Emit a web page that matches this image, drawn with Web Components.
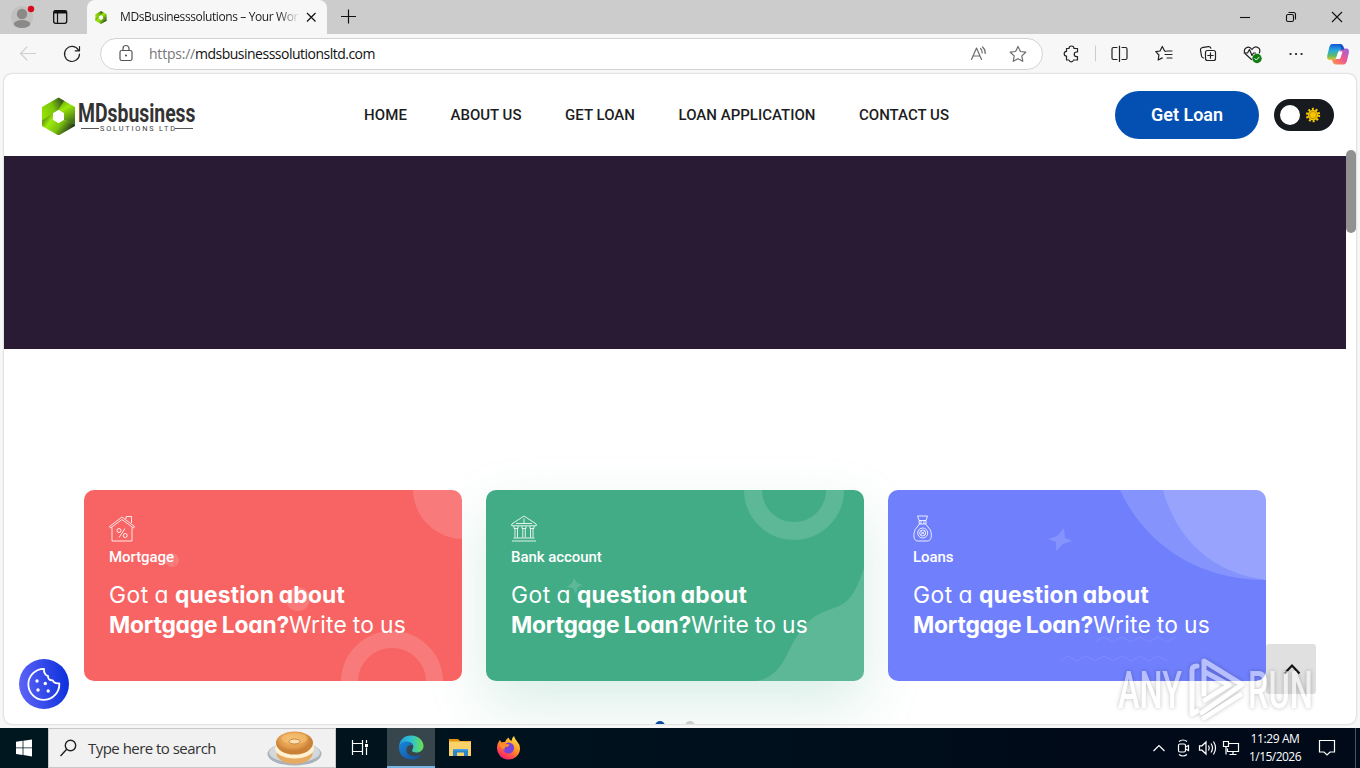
<!DOCTYPE html>
<html lang="en">
<head>
<meta charset="utf-8">
<title>MDsBusinesssolutions – Your World</title>
<style>
  :root {
    --ui-font: "Open Sans", "Noto Sans", sans-serif;
    --web-font: Roboto, sans-serif;
    --button-color: #0450b2;
  }

  * {
    box-sizing: border-box;
  }

  body {
    margin: 0;
    width: 1360px;
    height: 768px;
    overflow: hidden;
    display: flex;
    flex-direction: column;
    background: #f7f7f7;
    font-family: var(--ui-font);
  }
</style>
</head>
<body>
<tab-strip></tab-strip>
<address-toolbar></address-toolbar>
<web-page>
  <site-header></site-header>
  <loan-card kind="mortgage" color="#f86363">Mortgage</loan-card>
  <loan-card kind="bank" color="#41ac86">Bank account</loan-card>
  <loan-card kind="loans" color="#7080fd">Loans</loan-card>
</web-page>
<task-bar></task-bar>

<script>
// Inline text spread over a given width with letter-spacing
class FitText extends HTMLElement {
  constructor() {
    super();
    this.attachShadow({ mode: "open" });
  }

  connectedCallback() {
    this.shadowRoot.innerHTML = `<style>:host { display: inline-block; white-space: pre; }</style><slot></slot>`;
    const width = Number(this.getAttribute("width"));
    const natural = this.getBoundingClientRect().width;
    const count = this.textContent.length;
    this.style.letterSpacing = (width - natural) / count + "px";
  }
}

customElements.define("fit-text", FitText);

const hexLogo = `
  <linearGradient id="g1" x1="0" y1=".6" x2="1" y2=".1">
    <stop offset="0" stop-color="#92e000"/><stop offset=".45" stop-color="#7cc60c"/><stop offset="1" stop-color="#27381c"/>
  </linearGradient>
  <linearGradient id="g2" x1="0" y1="0" x2=".4" y2="1">
    <stop offset="0" stop-color="#5f9c12"/><stop offset=".4" stop-color="#9ae808"/><stop offset="1" stop-color="#48751a"/>
  </linearGradient>
  <linearGradient id="g3" x1="0" y1="0" x2="1" y2=".5">
    <stop offset="0" stop-color="#36551c"/><stop offset=".35" stop-color="#9dea0a"/><stop offset=".65" stop-color="#7cc30f"/><stop offset="1" stop-color="#26361c"/>
  </linearGradient>
  <path d="M0 9.500 16.500 0 23 3.800 17 12.300 11 16 0 24z" fill="url(#g1)"/>
  <path d="M22 3.200 33 9.500V28l-11-5.800v-6.400l-5.500-3.500z" fill="url(#g2)"/>
  <path d="M0 28.500V23l11-7.500v6.700l5.500 3.300 5.500-3.300 11 5v1.300L16.500 38z" fill="url(#g3)"/>
  <path d="M16.500 12.500 22 15.800v6.400l-5.500 3.300-5.500-3.300v-6.400z" fill="#fff"/>
`;

class TabStrip extends HTMLElement {
  constructor() {
    super();
    this.attachShadow({ mode: "open" });
  }

  connectedCallback() {
    this.shadowRoot.innerHTML = `
      <style>
        :host { display: flex; height: 34px; background: #ccc; flex: none; }
        svg { display: block; flex: none; fill: none; stroke: #111; }
        .tab {
          position: relative;
          display: flex;
          align-items: center;
          width: 240px;
          height: 34px;
          padding-left: 8px;
          box-sizing: border-box;
          background: #f7f7f7;
          border-radius: 8px 8px 0 0;
        }
        .title {
          width: 180px;
          margin-left: 13px;
          overflow: hidden;
          font-size: 12px;
          line-height: 18px;
          white-space: nowrap;
          color: #1b1b1b;
          -webkit-mask-image: linear-gradient(90deg, #000 158px, transparent 180px);
          mask-image: linear-gradient(90deg, #000 158px, transparent 180px);
        }
        .space { flex: 1; }
      </style>
      <svg width="87" height="34" viewBox="0 0 87 34">
        <circle cx="22" cy="17" r="11" fill="#c3c1bf" stroke="none"/>
        <circle cx="22" cy="14" r="5.200" fill="#8c8a88" stroke="none"/>
        <ellipse cx="22" cy="24" rx="8.300" ry="4" fill="#8c8a88" stroke="none"/>
        <circle cx="31" cy="9" r="3.200" fill="#d90a1e" stroke="none"/>
        <rect x="53.700" y="10.700" width="13" height="12.600" rx="2" stroke-width="1.300"/>
        <path d="M54 12h12.500" stroke-width="3"/>
        <path d="M57.500 13v10" stroke-width="1.200"/>
      </svg>
      <div class="tab">
        <svg width="12" height="13" viewBox="0 0 33 38" style="stroke:none">${hexLogo}</svg>
        <div class="title"><fit-text width="178">MDsBusinesssolutions – Your Wor</fit-text></div>
        <svg width="22" height="22" viewBox="0 0 22 22"><path d="M7 7l8.500 8.500M15.500 7 7 15.500" stroke-width="1.200"/></svg>
      </div>
      <svg width="42" height="34" viewBox="0 0 42 34"><path d="M14 16.500h15M21.500 9.500v14" stroke-width="1.200"/></svg>
      <div class="space"></div>
      <svg width="138" height="34" viewBox="0 0 138 34" stroke-width="1.100">
        <path d="M18 17.500h10"/>
        <rect x="64.500" y="14.500" width="7" height="7" rx="1.500"/>
        <path d="M66.500 12.500h5a2 2 0 0 1 2 2v5"/>
        <path d="M110 12l10 10M120 12l-10 10"/>
      </svg>
    `;
  }
}

customElements.define("tab-strip", TabStrip);

class AddressToolbar extends HTMLElement {
  constructor() {
    super();
    this.attachShadow({ mode: "open" });
  }

  connectedCallback() {
    this.shadowRoot.innerHTML = `
      <style>
        :host { display: flex; align-items: center; height: 40px; flex: none; background: #f7f7f7; }
        svg { display: block; flex: none; fill: none; stroke: #222; stroke-width: 1.200; stroke-linecap: round; stroke-linejoin: round; }
        .bar {
          display: flex;
          align-items: center;
          box-sizing: border-box;
          width: 943px;
          height: 32px;
          border: 1px solid #d3d3d3;
          border-radius: 16px;
          background: #fff;
        }
        .url { flex: 1; font-size: 14px; line-height: 20px; color: #111; margin-left: 6px; }
        .url .scheme { color: #777; }
      </style>
      <svg width="100" height="40" viewBox="0 0 100 40">
        <path d="M20.500 19.500h15M27 13l-6.500 6.500L27 26" style="stroke:#cfcfcf"/>
        <path d="M78.500 16.200a7.500 7.500 0 1 0 1 3.800M79.500 12.500v4.300h-4.300"/>
      </svg>
      <div class="bar">
        <svg width="42" height="30" viewBox="0 0 42 30" style="stroke:#555">
          <rect x="19" y="11.500" width="12" height="10" rx="1.800"/>
          <path d="M22 11V9.500a3 3 0 0 1 6 0V11"/><circle cx="25" cy="16.500" r=".5"/>
        </svg>
        <div class="url"><fit-text class="scheme" width="46">https://</fit-text><fit-text width="180">mdsbusinesssolutionsltd.com</fit-text></div>
        <svg width="76" height="30" viewBox="0 0 76 30" style="stroke:#6d6d6d">
          <path d="M5.500 20.500 10.500 9 15.500 20.500M7.200 17h6.600M14.500 9.500q2 1.800 1.700 4.500M16.500 8q3 2.500 2.700 6.500"/>
          <path d="M52 7.500l2.400 5 5.400.7-4 3.700 1 5.400-4.800-2.600-4.800 2.600 1-5.400-4-3.700 5.400-.7z"/>
        </svg>
      </div>
      <svg width="317" height="40" viewBox="1043 0 317 40">
        <path d="M1066.500 14.500h2.500a2.500 2.500 0 0 1 5 0h3.500v3.500h-1a2.300 2.300 0 0 0 0 4.600h1V26h-4a2.300 2.300 0 0 1-4.500 0h-2.500v-4a2.300 2.300 0 0 1 0-4.600z"/>
        <path d="M1095.500 12v15" style="stroke:#ccc;stroke-width:1"/>
        <path d="M1117 13.500h-3.500a1.500 1.500 0 0 0-1.500 1.500v9a1.500 1.500 0 0 0 1.500 1.500h3.500M1122 13.500h3.500a1.500 1.500 0 0 1 1.500 1.500v9a1.500 1.500 0 0 1-1.500 1.500h-3.500M1119.500 12v15.500"/>
        <path d="M1166 17.300l-1.400-.3-2.300-4.500-2.300 4.500-4.200.7 3.100 3.300-.7 5 4.100-2.100M1167 17h5M1165 20.500h7M1167 24h5"/>
        <path d="M1203.500 24c-1.200-.3-1.900-1-2-2l-1-6c-.2-1.200.5-2 1.500-2.300l6.200-1c1.200-.2 2.200.3 2.700 1.500"/>
        <rect x="1205.500" y="16.500" width="10" height="10" rx="2"/><path d="M1210.500 18.800v5.400M1207.800 21.500h5.400"/>
        <path d="M1251.500 25.500l-6-5.500c-4-5 3-9.500 6.500-4.500 3.500-5 9.500-1.500 7.300 3.500M1244 19h3.500l2-3.500 2.500 6 1.500-2.500h2"/>
        <circle cx="1257" cy="24.500" r="4.700" fill="#107c10" style="stroke:none"/><path d="M1254.800 24.600l1.500 1.500 2.900-3" style="stroke:#fff;stroke-width:1"/>
        <path d="M1290.500 20h.1M1296 20h.1M1301.500 20h.1" style="stroke-width:2.200"/>
        <defs>
          <linearGradient id="c1" x1="0" y1="0" x2="0" y2="1"><stop offset="0" stop-color="#1458d4"/><stop offset=".4" stop-color="#25a9dd"/><stop offset=".75" stop-color="#63bd63"/><stop offset="1" stop-color="#eec531"/></linearGradient>
          <linearGradient id="c2" x1="1" y1="0" x2="0" y2="1"><stop offset="0" stop-color="#9964e8"/><stop offset=".5" stop-color="#ef568e"/><stop offset="1" stop-color="#ff9a42"/></linearGradient>
        </defs>
        <g style="stroke:none">
          <path d="M1332 10h8q2.500 0 3.300 2.500l1 3.500h-3q-2.300 0-3 2.300l-1.500 5q-.8 2.700-3.500 2.700h-3q-4 0-3-4.500l1.800-7.500q1-4 2.900-4z" fill="url(#c1)"/>
          <path d="M1345.500 14.500h.8q3.300.2 2.500 4.500l-1.800 7.500q-1 4-3.500 4h-7.500q-2.500 0-3.300-2.500l-.7-2.500h2.500q2.300 0 3-2.300l1.700-5q.8-3.200 3.500-3.700z" fill="url(#c2)"/>
          <path d="M1340 10q2.500.2 3.300 2.500l1 3.300h-3q-1-5.500-3.300-5.800z" fill="#184fca"/>
          <path d="M1338.300 17.500h4.200l-2 6.500q-.4 1-1.500 1h-3.200z" fill="#fff"/>
        </g>
      </svg>
    `;
  }
}

customElements.define("address-toolbar", AddressToolbar);

class SiteHeader extends HTMLElement {
  constructor() {
    super();
    this.attachShadow({ mode: "open" });
  }

  connectedCallback() {
    this.shadowRoot.innerHTML = `
      <style>
        :host {
          display: flex;
          align-items: center;
          height: 82px;
          flex: none;
          font-family: var(--web-font);
          color: #1c1d22;
        }
        svg { display: block; }
        .logo { margin-left: 38px; }
        nav {
          display: flex;
          gap: 43.500px;
          margin-left: 167px;
          font-size: 15px;
          font-weight: 500;
          line-height: 20px;
        }
        .loan {
          display: flex;
          justify-content: center;
          align-items: center;
          width: 144px;
          height: 48px;
          margin: 0 15px 0 auto;
          border-radius: 24px;
          background: var(--button-color);
          color: #fff;
          font-size: 18px;
          font-weight: 600;
          line-height: 22px;
        }
        .loan fit-text { margin-top: -1px; }
        .toggle {
          display: flex;
          align-items: center;
          gap: 5px;
          box-sizing: border-box;
          width: 60px;
          height: 32px;
          margin-right: 22px;
          padding-left: 6px;
          border-radius: 16px;
          background: #171b20;
        }
        .knob { width: 20px; height: 20px; border-radius: 50%; background: #fff; }
      </style>
      <svg class="logo" width="155" height="40" viewBox="0 0 155 40">
        <g transform="translate(0 2.500)">${hexLogo}</g>
        <text x="36" y="27" font-size="26" font-weight="700" fill="#333" textLength="117.500" lengthAdjust="spacingAndGlyphs">MDsbusiness</text>
        <text x="58" y="36" font-size="7.400" fill="#444" textLength="75" lengthAdjust="spacing">SOLUTIONS LTD</text>
        <path d="M39 33.500h18M133 33.500h18" stroke="#555"/>
      </svg>
      <nav>
        <fit-text width="43">HOME</fit-text>
        <fit-text width="71">ABOUT US</fit-text>
        <fit-text width="70">GET LOAN</fit-text>
        <fit-text width="137">LOAN APPLICATION</fit-text>
        <fit-text width="90">CONTACT US</fit-text>
      </nav>
      <div class="loan"><fit-text width="72">Get Loan</fit-text></div>
      <div class="toggle">
        <div class="knob"></div>
        <svg width="16" height="16" viewBox="-8 -8 16 16">
          <circle r="6" fill="none" stroke="#f6c500" stroke-width="2.400" stroke-dasharray="2 1.770"/>
          <circle r="5.200" fill="#f6c500"/><circle r="3.600" fill="none" stroke="#8d7200" stroke-width=".6"/>
        </svg>
      </div>
    `;
  }
}

customElements.define("site-header", SiteHeader);

const cardArt = {
  mortgage: `
    <circle cx="379" cy="-1" r="50"/>
    <circle cx="308" cy="192" r="42.500" fill="none" stroke="#fff" stroke-width="17"/>
    <circle cx="214" cy="109" r="12"/><circle cx="88" cy="70" r="7"/>`,
  bank: `
    <circle cx="308" cy="0" r="41" fill="none" stroke="#fff" stroke-width="18"/>
    <path d="M378 78c-7 21-13 32-23 37-12 6-24 7-35 19-14 15-18 33-28 45-6 7-14 11-22 12h108z"/>
    <path d="M88 88l3 5 6 2-5 2-2 7-3-6-6-1 5-4z"/>`,
  loans: `
    <path d="M232 0c22 48 71 90 146 90V0z"/>
    <path d="M275 0c13 48 48 83 103 90V0z"/>
    <path d="M176 38l1 10 7 3-9 3-7 7v-9l-8-3 9-3z"/>
    <path d="M173 171l7-5 9 5 9-5 9 5 9-5 9 5 9-5 9 5 9-5 9 5 9-5 9 5M208 151l8-4 9 5 9-5 9 5 9-5 9 5 9-5 9 5 9-5" fill="none" stroke="#fff" stroke-width="1" style="opacity:.09"/>`
};

const cardIcon = {
  mortgage: `
    <path d="M3 12.500V26h20V12.500M.5 11.500 13 2l12.500 9.500-1 1.500L13 4.500 1.500 13zM17 4V1.500h5.500v6.500"/>
    <path d="M16 13.500l-6 9"/><circle cx="10" cy="15.500" r="2"/><circle cx="16.200" cy="20.500" r="2"/>`,
  bank: `
    <path d="M.8 9 13 1l12.200 8v1.800H.8zM5 8.500h16M13 3.500v5M3 11v2.500h4V11M11 11v2.500h4V11M19 11v2.500h4V11"/>
    <path d="M4 13.500v9M6.500 13.500v9M11.800 13.500v9M14.300 13.500v9M19.500 13.500v9M22 13.500v9M2.500 23h21M1 26h24"/>`,
  loans: `
    <path d="M4.500 1h10l-1.500 4.500v4l4 5c2.500 5 1.500 11.500-2.500 11.500h-10C.5 26 0 19.500 2.200 14.500l4-5v-4zM6 5.500h7M6 9h7M8 9v-3.500M11 9V5.500"/>
    <circle cx="9.700" cy="18" r="5"/><circle cx="9.700" cy="18" r="3"/><path d="M8 16.500l3.500 3M11.500 16.500l-3.500 3"/>`
};

class LoanCard extends HTMLElement {
  constructor() {
    super();
    this.attachShadow({ mode: "open" });
  }

  connectedCallback() {
    const kind = this.getAttribute("kind");

    this.shadowRoot.innerHTML = `
      <style>
        :host {
          display: block;
          position: relative;
          z-index: 1;
          box-sizing: border-box;
          width: 378px;
          height: 191px;
          padding: 25px;
          border-radius: 10px;
          background: ${this.getAttribute("color")};
          color: #fff;
          font-family: var(--web-font);
        }
        /* the middle card's glow stays under its neighbours */
        :host([kind="bank"]) { z-index: 0; box-shadow: 0 24px 60px rgba(65, 172, 134, 0.2); }
        .art { position: absolute; left: 0; top: 0; border-radius: 10px; fill: #fff; }
        .art > * { opacity: 0.15; }
        .content { position: relative; }
        .icon { display: block; fill: none; stroke: #fff; stroke-width: 0.85; }
        .label { margin-top: 5px; font-size: 15px; font-weight: 500; line-height: 20px; letter-spacing: -0.05px; }
        .heading {
          margin-top: 13px;
          font-family: Inter, sans-serif;
          font-feature-settings: "cv11";
          font-size: 22.800px;
          line-height: 30px;
          word-spacing: -1px;
          white-space: nowrap;
        }
        .bold { font-weight: 650; }
      </style>
      <svg class="art" width="378" height="191" viewBox="0 0 378 191">${cardArt[kind]}</svg>
      <div class="content">
        <svg class="icon" width="27" height="27" viewBox="0 0 27 27">${cardIcon[kind]}</svg>
        <div class="label"><slot></slot></div>
        <div class="heading">
          <div><fit-text width="66">Got a </fit-text><fit-text class="bold" width="170">question about</fit-text></div>
          <div><fit-text class="bold" width="180">Mortgage Loan?</fit-text><fit-text width="117">Write to us</fit-text></div>
        </div>
      </div>
    `;
  }
}

customElements.define("loan-card", LoanCard);

class WebPage extends HTMLElement {
  constructor() {
    super();
    this.attachShadow({ mode: "open" });
  }

  connectedCallback() {
    this.shadowRoot.innerHTML = `
      <style>
        :host {
          display: flex;
          flex-direction: column;
          position: relative;
          box-sizing: border-box;
          height: 650px;
          margin: 0 4px 4px;
          flex: none;
          background: #fff;
          border-radius: 8px;
          box-shadow: 0 0 2px rgba(0, 0, 0, 0.3);
        }
        .view {
          position: relative;
          display: flex;
          flex-direction: column;
          height: 650px;
          overflow: hidden;
          border-radius: 8px;
        }
        ::slotted(loan-card) { flex: none; }
        .banner { height: 193px; margin-right: 10px; flex: none; background: #281b33; }
        .cards { display: flex; gap: 24px; margin: 141px 0 0 80px; }
        .dots { display: flex; gap: 20px; height: 3px; overflow: hidden; margin: 40px 0 0 651px; position: relative; }
        .dots i { width: 10px; height: 10px; border-radius: 50%; background: #ccc; flex: none; }
        .dots i:first-child { background: #0b4aa2; }
        .thumb { position: absolute; right: 0; top: 76px; width: 10px; height: 83px; border-radius: 5px; background: #919191; }
        .up { position: absolute; z-index: 2; left: 1262px; top: 570px; background: rgba(0, 0, 0, 0.12); border-radius: 3px; }
        .cookie { position: absolute; left: 15px; top: 585px; }
        .mark { position: absolute; z-index: 3; left: 1106px; top: 576px; filter: drop-shadow(0 0 2px rgba(0, 0, 0, 0.5)); opacity: 0.5; }
        svg { display: block; }
      </style>
      <div class="view">
        <slot name="header"></slot>
        <div class="banner"></div>
        <div class="cards"><slot></slot></div>
        <div class="dots"><i></i><i></i></div>
        <div class="thumb"></div>
        <svg class="up" width="50" height="50" viewBox="0 0 50 50"><path d="M18.500 29.500 26 21.500l7.500 8" fill="none" stroke="#111" stroke-width="2.200"/></svg>
        <svg class="cookie" width="50" height="50" viewBox="0 0 50 50">
          <linearGradient id="ck" x1="0" y1=".4" x2="1" y2=".3"><stop offset="0" stop-color="#5c63f6"/><stop offset="1" stop-color="#0b30dc"/></linearGradient>
          <circle cx="25" cy="25" r="25" fill="url(#ck)"/>
          <path d="M25 9.800a15.500 15.500 0 1 0 15.300 14.500c-3.200.4-5.800-.8-6.500-3-3.600.2-5-1.600-4.700-4.200-2.700-1-4.400-3.800-4.100-7.300z" fill="none" stroke="#fff" stroke-width="1.800" stroke-linejoin="round"/>
          <g fill="#fff"><circle cx="18" cy="22" r="1.700"/><circle cx="26.300" cy="24.500" r="1.700"/><circle cx="19" cy="31" r="1.700"/><circle cx="29.200" cy="32" r="1.700"/></g>
        </svg>
        <svg class="mark" width="210" height="74" viewBox="0 0 210 74" font-family="Roboto, sans-serif" font-size="51" fill="#fff">
          <g font-weight="500">
            <text x="8" y="58" textLength="64" lengthAdjust="spacingAndGlyphs">ANY</text>
            <text x="138" y="58" textLength="65" lengthAdjust="spacingAndGlyphs">RUN</text>
          </g>
          <g fill="none" stroke="#fff" stroke-width="5" stroke-linejoin="round" stroke-linecap="round">
            <path d="M94 44V11l38 23.500-40 28M95 22l24 13-24 15M87 16q-5 0-5 4v44l5-3M94 68l36-23"/>
          </g>
        </svg>
      </div>
    `;
    this.querySelector("site-header").slot = "header";
  }
}

customElements.define("web-page", WebPage);

class TaskBar extends HTMLElement {
  constructor() {
    super();
    this.attachShadow({ mode: "open" });
  }

  connectedCallback() {
    this.shadowRoot.innerHTML = `
      <style>
        :host {
          display: flex;
          height: 40px;
          flex: none;
          background: linear-gradient(90deg, #00171f, #00111d 50%, #000a19 80%);
          color: #fff;
        }
        svg { display: block; flex: none; }
        .search {
          display: flex;
          align-items: center;
          box-sizing: border-box;
          width: 288px;
          height: 40px;
          border: 1px solid #c9c9c9;
          background: #f1f1f1;
          color: #333;
          font-size: 15px;
        }
        .search .hint { flex: 1; }
        .edge { background: #36464c; border-bottom: 2px solid #76b4e4; box-sizing: border-box; }
        .tray { margin-left: auto; }
        .clock { width: 62px; margin-right: 2px; font-size: 12px; line-height: 18px; text-align: center; padding-top: 2px; }
      </style>
      <svg width="48" height="40" viewBox="0 0 48 40" fill="#fff">
        <path d="M16 13.800l6.600-1v6.700H16zM23.400 12.700l8.600-1.300v8.100h-8.600zM16 20.300h6.600V27l-6.600-1zM23.400 20.300H32v8.100l-8.600-1.300z"/>
      </svg>
      <div class="search">
        <svg width="39" height="38" viewBox="0 0 39 38" fill="none" stroke="#222" stroke-width="1.400"><circle cx="21.500" cy="16.500" r="5.200"/><path d="M17.700 20.300 11.500 27"/></svg>
        <div class="hint"><fit-text width="128">Type here to search</fit-text></div>
        <svg width="70" height="38" viewBox="0 0 70 38">
          <defs>
            <radialGradient id="d1" cx=".45" cy=".35"><stop offset="0" stop-color="#f5bd6b"/><stop offset=".7" stop-color="#e39c4b"/><stop offset="1" stop-color="#c98038"/></radialGradient>
          </defs>
          <ellipse cx="29.500" cy="25" rx="27" ry="11.500" fill="#a9b1ba"/>
          <ellipse cx="29.500" cy="23.500" rx="25.500" ry="10" fill="#d3d8dd"/>
          <ellipse cx="29.500" cy="24.500" rx="18" ry="10.500" fill="#e6aa62"/>
          <ellipse cx="29.500" cy="19.500" rx="19.500" ry="10" fill="#fff1d1"/>
          <ellipse cx="29.500" cy="14" rx="18.500" ry="11.500" fill="url(#d1)"/>
          <ellipse cx="29.500" cy="9.500" rx="13" ry="5.500" fill="#fac982" opacity=".5"/>
          <ellipse cx="29.500" cy="12.500" rx="5.500" ry="2.500" fill="#fbe0b0" stroke="#c58445"/>
        </svg>
      </div>
      <svg width="51" height="40" viewBox="0 0 51 40" fill="none" stroke="#fff" stroke-width="1.200">
        <path d="M16.500 12v3.500h10V12M16.500 27v-3.500h10V27M16.500 15.500v8M26.500 15.500v8M30.500 12v3M30.500 19.500V27"/><path d="M29 17.500h3" stroke-width="3"/>
      </svg>
      <svg class="edge" width="48" height="40" viewBox="0 0 48 38">
        <defs>
          <linearGradient id="e1"><stop offset="0" stop-color="#2399de"/><stop offset=".5" stop-color="#2ec3cf"/><stop offset="1" stop-color="#6be04c"/></linearGradient>
          <linearGradient id="e2" x1="0" y1="0" x2="1" y2="1"><stop offset="0" stop-color="#1987d6"/><stop offset="1" stop-color="#114d9c"/></linearGradient>
        </defs>
        <path d="M12 20C12 12 17 7.500 24 7.500c8 0 12.500 5.500 12.500 10.500 0 4-3 6.500-7 6.500-3 0-4.500-1-4.500-2s1.300-1.500 1.300-4c0-3-3-4.500-6.300-4.500-4.500 0-8 3-8 6z" fill="url(#e1)"/>
        <path d="M12 20c0-4 4-7 8-6.500 3.500.3 5.500 2 6 4-3-1.500-6.500.5-6.500 4.500 0 5 6 8.500 14.500 4.500-1.500 3-5 5-9.500 5C17 31.500 12 26.500 12 20z" fill="url(#e2)"/>
      </svg>
      <svg width="49" height="40" viewBox="0 0 49 40">
        <path d="M14 11h9l2 2h11v4H14z" fill="#e2940d"/><path d="M14 13.500h22V28H14z" fill="#fbd26a"/>
        <path d="M18 21h15v7h-4v-3.500h-7V28h-4z" fill="#2a86cb"/><path d="M18 21h15v1.500H18z" fill="#46a2df"/>
      </svg>
      <svg width="49" height="40" viewBox="0 0 49 40">
        <defs>
          <linearGradient id="f1" x1=".8" y1="0" x2=".2" y2="1"><stop offset="0" stop-color="#ffe54a"/><stop offset=".45" stop-color="#ff9125"/><stop offset=".8" stop-color="#ff3b54"/><stop offset="1" stop-color="#e3187d"/></linearGradient>
        </defs>
        <path d="M16 12l1.500 2.500q1-.8 3.500-.5 1-3 3.500-4.500.5 2 3 3.500 0-3 2.500-5 1 3.500 3.500 6 2.800 3 2.500 7A11.500 11 0 0 1 13 20q0-5 3-8z" fill="url(#f1)"/>
        <circle cx="24.500" cy="20" r="5.600" fill="#7643dd"/>
        <path d="M15 16q5-3 8 0l2.500.5q-.5 2.500-4 2.500-2 1.500-.5 3-4-1-6-6z" fill="#ff8a2b"/>
      </svg>
      <svg class="tray" width="100" height="40" viewBox="1144 0 100 40" fill="none" stroke="#fff" stroke-width="1.200">
        <path d="M1153.500 23l5.500-5.500 5.500 5.500"/>
        <rect x="1178.500" y="16" width="7" height="8" rx="1.500"/><path d="M1185.500 19l3-1.500v5l-3-1.500M1179 13.500q4-3 8 0M1179 26.500q4 3 8 0"/>
        <path d="M1199.500 17.800h2.500l4-3.800v12l-4-3.800h-2.500zM1208.500 17.500q1.500 2.500 0 5M1211 15.500q3 4.500 0 9M1213.500 13.500q4 6.500 0 13"/>
        <path d="M1229 15.500h9.500v8h-11v-3M1233 23.500v3M1229.500 26.500h7"/><path d="M1223.500 13.500h5v5h-5zM1226 18.500v8"/>
      </svg>
      <div class="clock"><fit-text width="49">11:29 AM</fit-text><br><fit-text width="52">1/15/2026</fit-text></div>
      <svg width="52" height="40" viewBox="1308 0 52 40" fill="none" stroke="#fff" stroke-width="1.200">
        <path d="M1319.500 12.500h15v11.500h-4.500l-3 3-3-3h-4.500z"/><path d="M1355.500 0v40" stroke="#4b5560" stroke-width="1"/>
      </svg>
    `;
  }
}

customElements.define("task-bar", TaskBar);
</script>
</body>
</html>
